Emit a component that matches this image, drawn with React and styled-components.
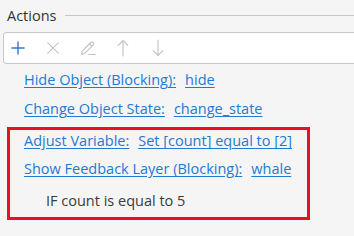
import React from 'react'
import styled, { createGlobalStyle } from 'styled-components'

const GlobalStyle = createGlobalStyle`
    html, body {
        margin: 0;
        padding: 0;
        background: #f5f5f5;
        overflow: hidden;
    }
    body {
        font-family: 'Open Sans', 'Noto Sans', sans-serif;
        font-size: 14.5px;
        line-height: 20px;
        color: #333;
    }
`

const Page = styled.div`
    width: 354px;
    height: 236px;
    padding-top: 6px;
    box-sizing: border-box;
`

const Header = styled.div`
    display: flex;
    align-items: center;
    gap: 9px;
    padding-left: 7px;
    height: 20px;
`

const HeaderTitle = styled.span`
    color: #333;
`

const HeaderRule = styled.div`
    flex: 1;
    height: 1px;
    margin-top: -2px;
    background: #c8c8c8;
`

const Toolbar = styled.div`
    display: flex;
    align-items: center;
    gap: 7px;
    margin: 6px 0 0 3px;
    height: 30px;
    background: #fff;
    border: 1px solid #c8c8c8;
    border-right: none;
    border-radius: 4px 0 0 4px;
`

const ToolButton = styled.button`
    width: 28px;
    height: 30px;
    padding: 0;
    border: none;
    background: none;
    display: flex;
    align-items: center;
    justify-content: center;
    color: ${props => (props.active ? '#2b7bd6' : '#c2c2c2')};
`

const List = styled.div`
    display: flex;
    flex-direction: column;
    gap: 9px;
    padding-top: 6px;
`

const Row = styled.div`
    display: flex;
    gap: 9px;
    height: 20px;
    white-space: nowrap;
    padding-left: ${props => props.indent}px;
`

const ConditionRow = styled(Row)`
    margin-top: 4px;
`

const Link = styled.a`
    color: #1f7ad3;
    text-decoration: underline;
    text-underline-offset: 2px;
    cursor: pointer;
`

const Condition = styled.span`
    color: #3a3a3a;
`

const Highlight = styled.div`
    display: flex;
    flex-direction: column;
    gap: 8px;
    margin: -1px 0 0 7px;
    width: 303px;
    box-sizing: border-box;
    border: 3px solid #e8111f;
    padding: 1px 0 6px;
`

const Icon = ({ children }) => (
    <svg width="18" height="18" viewBox="0 0 18 18" fill="none" stroke="currentColor" strokeWidth="1.1" strokeLinecap="round" strokeLinejoin="round">
        {children}
    </svg>
)

const actions = [
    { label: 'Hide Object (Blocking):', value: 'hide' },
    { label: 'Change Object State:', value: 'change_state' },
]

export default () => (
    <Page>
        <GlobalStyle />
        <Header>
            <HeaderTitle>Actions</HeaderTitle>
            <HeaderRule />
        </Header>
        <Toolbar>
            <ToolButton active>
                <Icon>
                    <path d="M9 2.5v13M2.5 9h13" strokeWidth="1.4" strokeLinecap="butt" />
                </Icon>
            </ToolButton>
            <ToolButton>
                <Icon>
                    <path d="M3.8 3.8l10.4 10.4M14.2 3.8L3.8 14.2" />
                </Icon>
            </ToolButton>
            <ToolButton>
                <Icon>
                    <path d="M2.5 15.5l.8-3.4 8.6-8.6a1.6 1.6 0 0 1 2.3 2.3l-8.6 8.6-3.1 1.1zM10.6 4.8l2.3 2.3M9.5 15.5h7" />
                </Icon>
            </ToolButton>
            <ToolButton>
                <Icon>
                    <path d="M9 17V1.5M4.2 6.3L9 1.5l4.8 4.8" />
                </Icon>
            </ToolButton>
            <ToolButton>
                <Icon>
                    <path d="M9 1V16.5M4.2 11.7L9 16.5l4.8-4.8" />
                </Icon>
            </ToolButton>
        </Toolbar>
        <List>
            {actions.map(a => (
                <Row key={a.label} indent={24}>
                    <Link>{a.label}</Link>
                    <Link>{a.value}</Link>
                </Row>
            ))}
            <Highlight>
                <Row indent={14}>
                    <Link>Adjust Variable:</Link>
                    <Link>Set [count] equal to [2]</Link>
                </Row>
                <Row indent={14}>
                    <Link>Show Feedback Layer (Blocking):</Link>
                    <Link>whale</Link>
                </Row>
                <ConditionRow indent={36}>
                    <Condition>IF count is equal to 5</Condition>
                </ConditionRow>
            </Highlight>
        </List>
    </Page>
)
